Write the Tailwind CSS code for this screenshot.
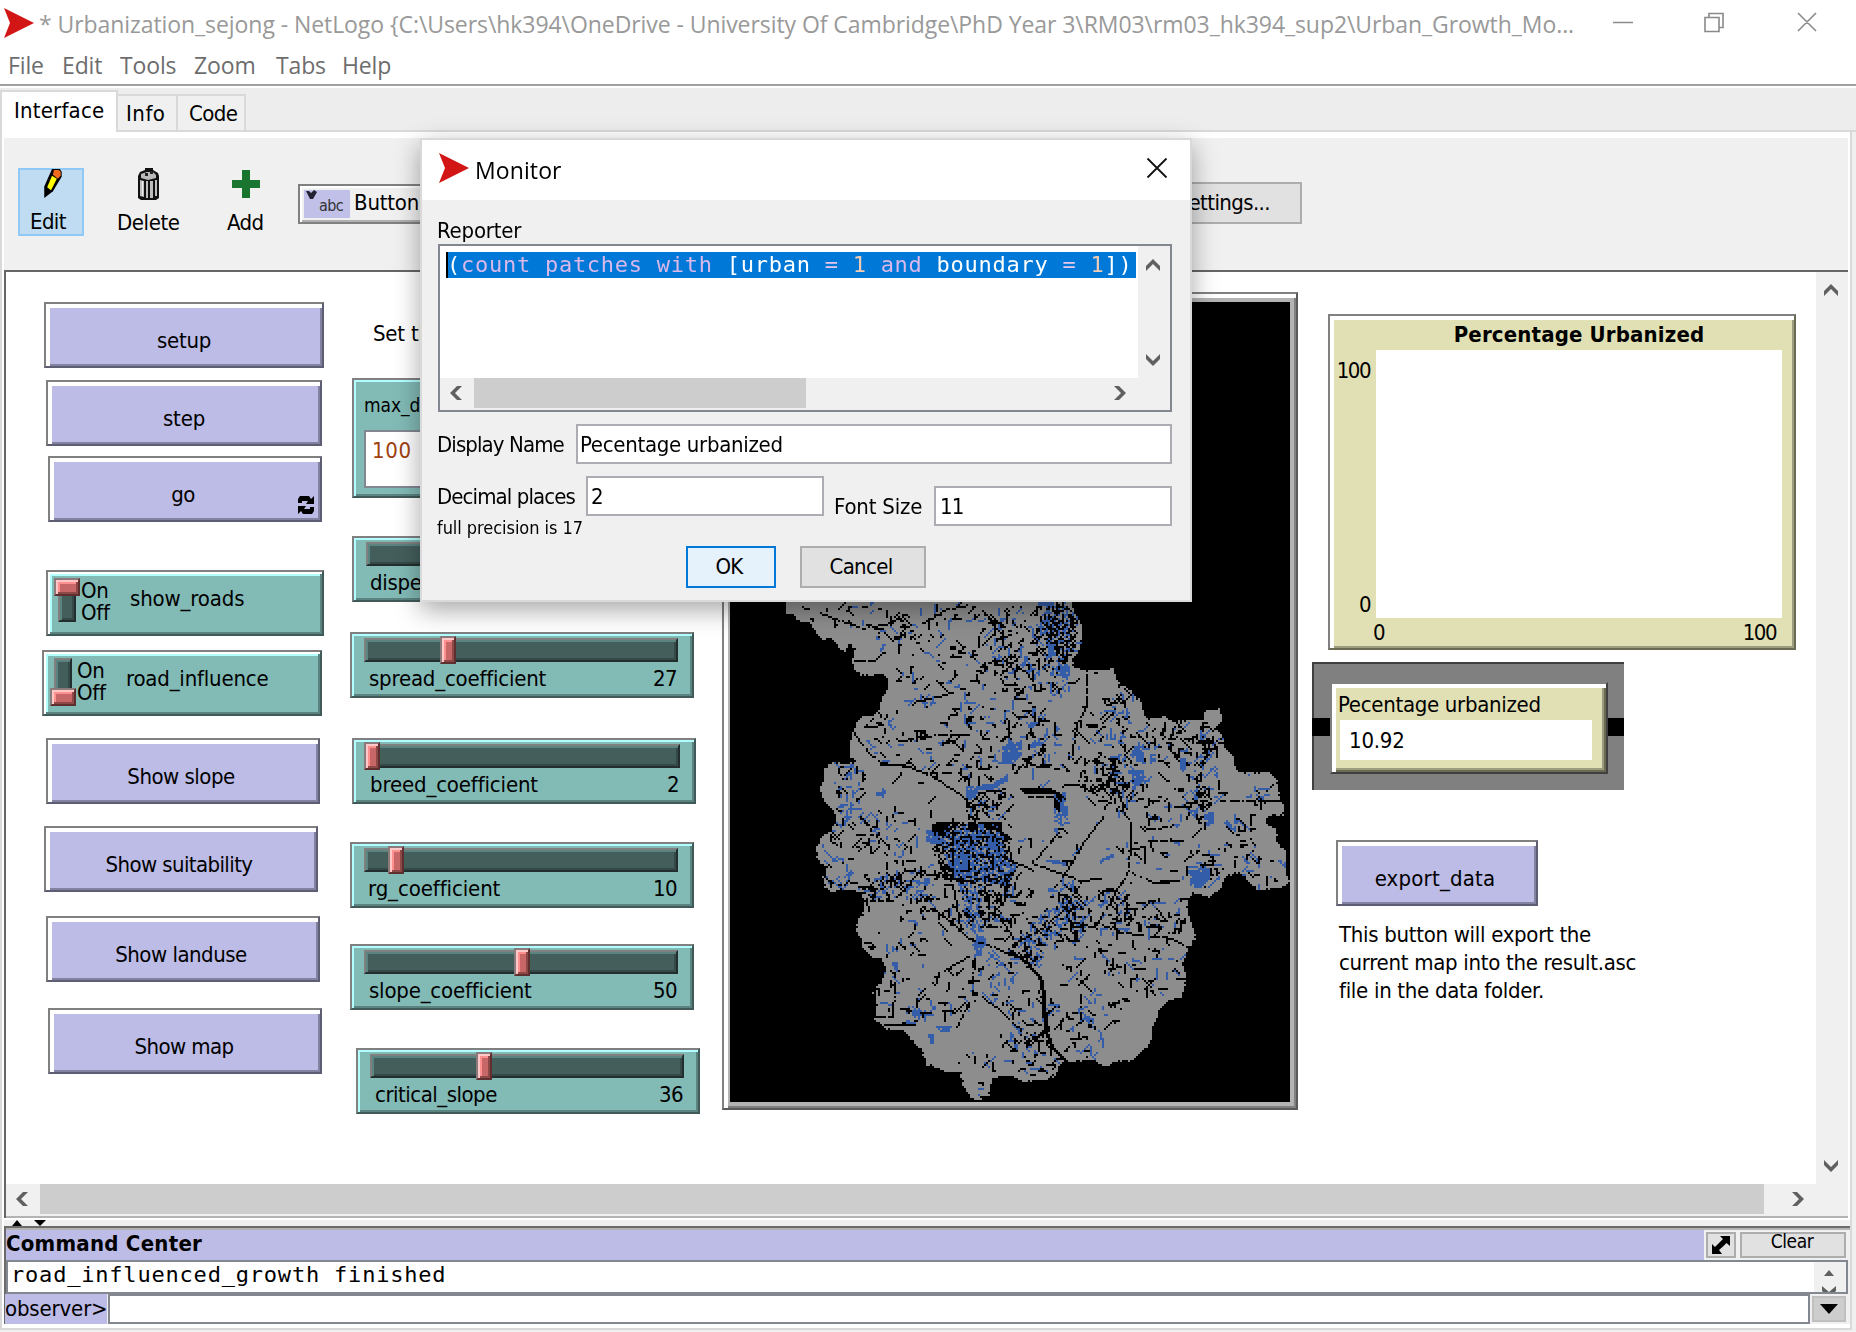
<!DOCTYPE html>
<html lang="en">
<head>
<meta charset="utf-8">
<title>Urbanization_sejong - NetLogo</title>
<script src="https://cdn.jsdelivr.net/npm/@tailwindcss/browser@4"></script>
</head>
<body class="w-[1856px] h-[1332px] overflow-hidden bg-[#f0f0f0] text-black font-['DejaVu_Sans_Condensed','DejaVu_Sans',sans-serif] text-[22px] leading-[24px] tracking-[-0.6px] whitespace-nowrap">
<div class="relative flex flex-col w-[1856px] h-[1332px]">

  <!-- Title bar -->
  <header class="flex items-center h-[45px] bg-white pl-1 shrink-0">
    <svg class="w-[31px] h-[32px] shrink-0" viewBox="0 0 31 32"><path d="M0 1L30 16L0 31L6 16Z" fill="#d21515"/></svg>
    <div class="ml-[4px] mt-[3px] w-[1536px] text-[#999] font-['Open_Sans',sans-serif] text-[23px] leading-[32px] tracking-[-0.07px]">* Urbanization_sejong - NetLogo {C:\Users\hk394\OneDrive - University Of Cambridge\PhD Year 3\RM03\rm03_hk394_sup2\Urban_Growth_Mo...</div>
    <svg class="ml-[38px] w-[206px] h-[22px]" viewBox="0 0 206 22" fill="none" stroke="#8a8a8a" stroke-width="1.6"><path d="M0 10.500H20M92 5.500h14v14h-14zM96 5.500v-4h14v14h-4M185 1L203 19M203 1L185 19"/></svg>
  </header>
  <nav class="flex h-[39px] bg-white pl-[8px] pt-[4px] gap-[18px] text-[#6d6d6d] font-['Open_Sans',sans-serif] text-[23px] leading-[32px] tracking-[-0.15px] shrink-0">
    <span class="w-[36px]">File</span><span class="w-[40px]">Edit</span><span class="w-[56px]">Tools</span><span class="w-[64px]">Zoom</span><span class="w-[48px]">Tabs</span><span>Help</span>
  </nav>
  <div class="h-1 bg-white border-t-2 border-[#a0a0a0] shrink-0"></div>

  <!-- Tabs -->
  <div class="flex items-end h-[44px] bg-[#ededed] shrink-0">
    <div class="w-[118px] h-[42px] bg-white border-2 border-b-0 border-[#d9d9d9] pl-[12px] pt-[7px] tracking-[0.2px]">Interface</div>
    <div class="w-[60px] h-[38px] bg-[#f0f0f0] border-2 border-l-0 border-[#d9d9d9] pl-[8px] pt-[6px] tracking-[0.5px]">Info</div>
    <div class="w-[68px] h-[38px] bg-[#f0f0f0] border-2 border-l-0 border-[#d9d9d9] pl-[11px] pt-[6px]">Code</div>
    <div class="grow h-0.5 bg-[#d9d9d9]"></div>
  </div>

  <div class="flex flex-col w-[1852px] h-[1198px] bg-white border-x-2 border-b-2 border-[#d9d9d9] pl-0.5 pt-[6px] shrink-0">
    <!-- Toolbar -->
    <div class="flex h-[132px] bg-[#f0f0f0] shrink-0 w-[1844px]">
      <div class="ml-[14px] mt-[30px] w-[66px] h-[68px] bg-[#bfdcf3] border-2 border-[#90c8f6] flex flex-col pl-[10px]">
        <svg class="ml-[12px] w-[20px] h-[31px] mt-[-2px]" viewBox="0 0 20 31"><path d="M10 1h8l2 3v5L11 24L2 31V19Z" fill="#000"/><path d="M10 8L15 11L9 23L5 20Z" fill="#ff0"/><path d="M12 2h5l2 2v4l-3 3l-5-4Z" fill="#f26a1b"/></svg>
        <span class="mt-[12px]">Edit</span>
      </div>
      <div class="ml-[33px] mt-[30px] w-[67px]">
        <svg class="ml-[20px] w-[23px] h-[32px]" viewBox="0 0 23 32"><path d="M3 4L8 2V0h8v2l5 3l1 3v22l-3 2H4l-3-2V8Z" fill="#111"/><path d="M4 6l6-2h6l3 3v3l-8 2l-7-2Z" fill="#bbb"/><path d="M3 12l4 1v16l-4-1ZM9 13h2v17H9ZM13 13h3v17h-3ZM18 12h2v16h-2Z" fill="#bdbdbd"/><path d="M8 5h3v3H8ZM13 3h3v3h-3Z" fill="#222"/><path d="M5 13h1v15H5Z" fill="#eee"/></svg>
        <div class="mt-[11px] tracking-[-0.4px]">Delete</div>
      </div>
      <div class="ml-[43px] mt-[32px] w-[44px]">
        <svg class="ml-[5px] w-[28px] h-[28px]" viewBox="0 0 28 28"><path d="M10 0h8v10h10v8H18v10h-8V18H0v-8h10Z" fill="#1a7530"/></svg>
        <div class="mt-[13px]">Add</div>
      </div>
      <div class="ml-[27px] mt-[46px] w-[300px] h-[40px] bg-[#f0f0f0] border-2 border-[#808080] shadow-[inset_2px_2px_0_#fff,inset_-2px_-2px_0_#b0b0b0] flex pl-1 pt-1">
        <div class="relative w-[46px] h-[28px] bg-[#c0c0e8]">
          <svg class="absolute left-0.5 top-0 w-[11px] h-[10px]" viewBox="0 0 11 10"><path d="M0 1h3l2 2l3-3l3 2L7 9H4L2 5Z" fill="#223"/></svg>
          <span class="absolute left-[15px] top-[5px] text-[16px] leading-[22px] text-[#333]">abc</span>
        </div>
        <span class="ml-1 mt-[3px] leading-[20px] tracking-[-0.2px]">Button</span>
      </div>
      <div class="ml-[536px] mt-[44px] w-[168px] h-[42px] bg-[#e1e1e1] border-2 border-[#adadad] text-right pr-[30px] pt-[7px]">Settings...</div>
    </div>

    <!-- Model interface: widgets placed freely on a canvas -->
    <div class="relative flex h-[948px] bg-white border-l-2 border-t-2 border-[#666] shrink-0 w-[1844px]">
      <div class="grow"></div>
      <div class="w-8 h-[912px] bg-[#f0f0f0] flex flex-col items-center justify-between py-[12px] pr-0.5">
        <svg class="w-[14px] h-[12px]" viewBox="0 0 14 12"><path d="M7 0L14 7V12L7 5L0 12V7Z" fill="#606060"/></svg>
        <svg class="w-[14px] h-[12px]" viewBox="0 0 14 12"><path d="M7 12L14 5V0L7 7L0 0V5Z" fill="#606060"/></svg>
      </div>
      <div class="absolute left-0 top-[912px] w-[1842px] h-[34px] bg-[#f0f0f0] border-b-2 border-[#b3b3b3]">
        <div class="flex items-center h-[30px]">
          <svg class="ml-[10px] w-[12px] h-[14px]" viewBox="0 0 12 14"><path d="M0 7L7 0H12L5 7L12 14H7Z" fill="#606060"/></svg>
          <div class="ml-[12px] w-[1724px] h-[30px] bg-[#cdcdcd]"></div>
          <svg class="ml-[28px] w-[12px] h-[14px]" viewBox="0 0 12 14"><path d="M12 7L5 0H0L7 7L0 14H5Z" fill="#606060"/></svg>
        </div>
      </div>

      <!-- The layer's origin is the window's top left corner -->
      <div class="absolute left-[-6px] top-[-272px]">
        <!-- Buttons -->
        <div class="absolute left-[44px] top-[302px] w-[280px] h-[66px] bg-[#bcbce6] border-2 border-t-[#808080] border-l-[#808080] border-r-[#5d5d74] border-b-[#5d5d74] shadow-[inset_4px_4px_0_#fff,inset_-2px_-2px_0_#8383a1] text-center pt-[25px] tracking-[-0.3px]">setup</div>
        <div class="absolute left-[46px] top-[380px] w-[276px] h-[66px] bg-[#bcbce6] border-2 border-t-[#808080] border-l-[#808080] border-r-[#5d5d74] border-b-[#5d5d74] shadow-[inset_4px_4px_0_#fff,inset_-2px_-2px_0_#8383a1] text-center pt-[25px] tracking-[-0.2px]">step</div>
        <div class="absolute left-[48px] top-[456px] w-[274px] h-[66px] bg-[#bcbce6] border-2 border-t-[#808080] border-l-[#808080] border-r-[#5d5d74] border-b-[#5d5d74] shadow-[inset_4px_4px_0_#fff,inset_-2px_-2px_0_#8383a1] text-center pt-[25px] pr-1">go
          <svg class="absolute right-[6px] bottom-[6px] w-[16px] h-[18px]" viewBox="0 0 16 18"><path d="M2 0h9l2 3l3-3v8H8l2-3H4v2H0V3ZM14 18H5l-2-3l-3 3v-8h8l-2 3h6v-2h4v4Z"/></svg>
        </div>
        <div class="absolute left-[46px] top-[738px] w-[274px] h-[66px] bg-[#bcbce6] border-2 border-t-[#808080] border-l-[#808080] border-r-[#5d5d74] border-b-[#5d5d74] shadow-[inset_4px_4px_0_#fff,inset_-2px_-2px_0_#8383a1] text-center pt-[25px] pr-1 tracking-[-0.5px]">Show slope</div>
        <div class="absolute left-[44px] top-[826px] w-[274px] h-[66px] bg-[#bcbce6] border-2 border-t-[#808080] border-l-[#808080] border-r-[#5d5d74] border-b-[#5d5d74] shadow-[inset_4px_4px_0_#fff,inset_-2px_-2px_0_#8383a1] text-center pt-[25px] pr-1">Show suitability</div>
        <div class="absolute left-[46px] top-[916px] w-[274px] h-[66px] bg-[#bcbce6] border-2 border-t-[#808080] border-l-[#808080] border-r-[#5d5d74] border-b-[#5d5d74] shadow-[inset_4px_4px_0_#fff,inset_-2px_-2px_0_#8383a1] text-center pt-[25px] pr-1 tracking-[-0.5px]">Show landuse</div>
        <div class="absolute left-[48px] top-[1008px] w-[274px] h-[66px] bg-[#bcbce6] border-2 border-t-[#808080] border-l-[#808080] border-r-[#5d5d74] border-b-[#5d5d74] shadow-[inset_4px_4px_0_#fff,inset_-2px_-2px_0_#8383a1] text-center pt-[25px] pr-[2px] tracking-[-0.6px]">Show map</div>

        <!-- Switches -->
        <div class="absolute left-[46px] top-[570px] w-[278px] h-[66px] bg-[#82bab6] border-2 border-t-[#808080] border-l-[#808080] border-r-[#3f5a58] border-b-[#3f5a58] shadow-[inset_2px_2px_0_#fff,inset_-2px_-2px_0_#5b8380,inset_4px_4px_0_#b3ffff] flex">
          <div class="relative ml-[10px] mt-[6px] w-[18px] h-[44px] bg-[#445e5c] border-2 border-t-[#808080] border-l-[#808080] border-r-[#222f2e] border-b-[#222f2e] shadow-[inset_2px_2px_0_#5b8380,inset_-2px_-2px_0_#354a48]">
            <div class="absolute left-[-6px] top-[-2px] w-[26px] h-[18px] bg-[#c86767] border-2 border-t-[#8c7a7a] border-l-[#8c7a7a] border-r-[#5f2f2f] border-b-[#5f2f2f] shadow-[inset_2px_2px_0_#ffc8c8,inset_-2px_-2px_0_#8d4848,inset_4px_4px_0_#ff9090]"></div>
          </div>
          <div class="ml-[5px] mt-[8px] w-[49px] leading-[22px] tracking-[-0.3px]">On<br>Off</div><div class="mt-[15px] tracking-[-0.15px]">show_roads</div>
        </div>
        <div class="absolute left-[42px] top-[650px] w-[280px] h-[66px] bg-[#82bab6] border-2 border-t-[#808080] border-l-[#808080] border-r-[#3f5a58] border-b-[#3f5a58] shadow-[inset_2px_2px_0_#fff,inset_-2px_-2px_0_#5b8380,inset_4px_4px_0_#b3ffff] flex">
          <div class="relative ml-[10px] mt-[6px] w-[18px] h-[44px] bg-[#445e5c] border-2 border-t-[#808080] border-l-[#808080] border-r-[#222f2e] border-b-[#222f2e] shadow-[inset_2px_2px_0_#5b8380,inset_-2px_-2px_0_#354a48]">
            <div class="absolute left-[-6px] top-[28px] w-[26px] h-[18px] bg-[#c86767] border-2 border-t-[#8c7a7a] border-l-[#8c7a7a] border-r-[#5f2f2f] border-b-[#5f2f2f] shadow-[inset_2px_2px_0_#ffc8c8,inset_-2px_-2px_0_#8d4848,inset_4px_4px_0_#ff9090]"></div>
          </div>
          <div class="ml-[5px] mt-[8px] w-[49px] leading-[22px] tracking-[-0.3px]">On<br>Off</div><div class="mt-[15px] tracking-[-0.2px]">road_influence</div>
        </div>

        <!-- Note and input -->
        <div class="absolute left-[373px] top-[322px] tracking-[-0.2px]">Set the</div>
        <div class="absolute left-[352px] top-[378px] w-[200px] h-[120px] bg-[#82bab6] border-2 border-t-[#808080] border-l-[#808080] border-r-[#3f5a58] border-b-[#3f5a58] shadow-[inset_2px_2px_0_#b3ffff,inset_-2px_-2px_0_#5b8380] pl-[10px]">
          <div class="mt-[13px] text-[19px] tracking-[-0.1px]">max_depth</div>
          <div class="mt-[13px] w-[170px] h-[58px] bg-white border-2 border-[#828790] pl-[6px] pt-[7px] text-[#a04010] tracking-[0.6px]">100</div>
        </div>

        <!-- Sliders -->
        <div class="absolute left-[352px] top-[536px] w-[344px] h-[66px] bg-[#82bab6] border-2 border-t-[#808080] border-l-[#808080] border-r-[#3f5a58] border-b-[#3f5a58] shadow-[inset_2px_2px_0_#b3ffff,inset_-2px_-2px_0_#5b8380] pl-[12px] pt-[4px]">
          <div class="w-[314px] h-6 bg-[#445e5c] border-2 border-t-[#808080] border-l-[#808080] border-r-[#222f2e] border-b-[#222f2e] shadow-[inset_2px_2px_0_#5b8380,inset_-2px_-2px_0_#354a48]"></div>
          <div class="mt-[5px] pl-[4px] tracking-[-0.3px]">dispersion_coefficient</div>
        </div>
        <div class="absolute left-[350px] top-[632px] w-[344px] h-[66px] bg-[#82bab6] border-2 border-t-[#808080] border-l-[#808080] border-r-[#3f5a58] border-b-[#3f5a58] shadow-[inset_2px_2px_0_#b3ffff,inset_-2px_-2px_0_#5b8380] pl-[12px] pt-[4px]">
          <div class="relative w-[314px] h-6 bg-[#445e5c] border-2 border-t-[#808080] border-l-[#808080] border-r-[#222f2e] border-b-[#222f2e] shadow-[inset_2px_2px_0_#5b8380,inset_-2px_-2px_0_#354a48]"><div class="absolute left-[74px] top-[-4px] w-4 h-7 bg-[#c86767] border-2 border-t-[#8c7a7a] border-l-[#8c7a7a] border-r-[#5f2f2f] border-b-[#5f2f2f] shadow-[inset_2px_2px_0_#ffc8c8,inset_-2px_-2px_0_#8d4848,inset_4px_4px_0_#ff9090]"></div></div>
          <div class="mt-[5px] pl-[5px] w-[313px] flex justify-between"><span class="tracking-[-0.2px]">spread_coefficient</span><span>27</span></div>
        </div>
        <div class="absolute left-[352px] top-[738px] w-[344px] h-[66px] bg-[#82bab6] border-2 border-t-[#808080] border-l-[#808080] border-r-[#3f5a58] border-b-[#3f5a58] shadow-[inset_2px_2px_0_#b3ffff,inset_-2px_-2px_0_#5b8380] pl-[12px] pt-[4px]">
          <div class="relative w-[314px] h-6 bg-[#445e5c] border-2 border-t-[#808080] border-l-[#808080] border-r-[#222f2e] border-b-[#222f2e] shadow-[inset_2px_2px_0_#5b8380,inset_-2px_-2px_0_#354a48]"><div class="absolute left-[-4px] top-[-4px] w-4 h-7 bg-[#c86767] border-2 border-t-[#8c7a7a] border-l-[#8c7a7a] border-r-[#5f2f2f] border-b-[#5f2f2f] shadow-[inset_2px_2px_0_#ffc8c8,inset_-2px_-2px_0_#8d4848,inset_4px_4px_0_#ff9090]"></div></div>
          <div class="mt-[5px] pl-[4px] w-[313px] flex justify-between"><span class="tracking-[-0.15px]">breed_coefficient</span><span>2</span></div>
        </div>
        <div class="absolute left-[350px] top-[842px] w-[344px] h-[66px] bg-[#82bab6] border-2 border-t-[#808080] border-l-[#808080] border-r-[#3f5a58] border-b-[#3f5a58] shadow-[inset_2px_2px_0_#b3ffff,inset_-2px_-2px_0_#5b8380] pl-[12px] pt-[4px]">
          <div class="relative w-[314px] h-6 bg-[#445e5c] border-2 border-t-[#808080] border-l-[#808080] border-r-[#222f2e] border-b-[#222f2e] shadow-[inset_2px_2px_0_#5b8380,inset_-2px_-2px_0_#354a48]"><div class="absolute left-[22px] top-[-4px] w-4 h-7 bg-[#c86767] border-2 border-t-[#8c7a7a] border-l-[#8c7a7a] border-r-[#5f2f2f] border-b-[#5f2f2f] shadow-[inset_2px_2px_0_#ffc8c8,inset_-2px_-2px_0_#8d4848,inset_4px_4px_0_#ff9090]"></div></div>
          <div class="mt-[5px] pl-[4px] w-[313px] flex justify-between"><span class="tracking-[-0.1px]">rg_coefficient</span><span>10</span></div>
        </div>
        <div class="absolute left-[350px] top-[944px] w-[344px] h-[66px] bg-[#82bab6] border-2 border-t-[#808080] border-l-[#808080] border-r-[#3f5a58] border-b-[#3f5a58] shadow-[inset_2px_2px_0_#b3ffff,inset_-2px_-2px_0_#5b8380] pl-[12px] pt-[4px]">
          <div class="relative w-[314px] h-6 bg-[#445e5c] border-2 border-t-[#808080] border-l-[#808080] border-r-[#222f2e] border-b-[#222f2e] shadow-[inset_2px_2px_0_#5b8380,inset_-2px_-2px_0_#354a48]"><div class="absolute left-[148px] top-[-4px] w-4 h-7 bg-[#c86767] border-2 border-t-[#8c7a7a] border-l-[#8c7a7a] border-r-[#5f2f2f] border-b-[#5f2f2f] shadow-[inset_2px_2px_0_#ffc8c8,inset_-2px_-2px_0_#8d4848,inset_4px_4px_0_#ff9090]"></div></div>
          <div class="mt-[5px] pl-[5px] w-[313px] flex justify-between"><span class="tracking-[-0.2px]">slope_coefficient</span><span>50</span></div>
        </div>
        <div class="absolute left-[356px] top-[1048px] w-[344px] h-[66px] bg-[#82bab6] border-2 border-t-[#808080] border-l-[#808080] border-r-[#3f5a58] border-b-[#3f5a58] shadow-[inset_2px_2px_0_#b3ffff,inset_-2px_-2px_0_#5b8380] pl-[12px] pt-[4px]">
          <div class="relative w-[314px] h-6 bg-[#445e5c] border-2 border-t-[#808080] border-l-[#808080] border-r-[#222f2e] border-b-[#222f2e] shadow-[inset_2px_2px_0_#5b8380,inset_-2px_-2px_0_#354a48]"><div class="absolute left-[104px] top-[-4px] w-4 h-7 bg-[#c86767] border-2 border-t-[#8c7a7a] border-l-[#8c7a7a] border-r-[#5f2f2f] border-b-[#5f2f2f] shadow-[inset_2px_2px_0_#ffc8c8,inset_-2px_-2px_0_#8d4848,inset_4px_4px_0_#ff9090]"></div></div>
          <div class="mt-[5px] pl-[5px] w-[313px] flex justify-between"><span class="tracking-[-0.5px]">critical_slope</span><span>36</span></div>
        </div>

        <!-- World view -->
        <div class="absolute left-[722px] top-[292px] w-[576px] h-[818px] bg-[#b3b3b3] border-2 border-t-[#808080] border-l-[#808080] border-r-[#5a5a5a] border-b-[#5a5a5a] shadow-[inset_4px_4px_0_#fff,inset_-2px_-2px_0_#808080] pl-[6px] pt-[8px]">
          <canvas id="world" width="280" height="400" class="block w-[560px] h-[800px] [image-rendering:pixelated]"></canvas>
        </div>

        <!-- Plot -->
        <div class="absolute left-[1328px] top-[314px] w-[468px] h-[336px] bg-[#e0e0b4] border-2 border-t-[#808080] border-l-[#808080] border-r-[#6b6b54] border-b-[#6b6b54] shadow-[inset_4px_4px_0_#fff,inset_-2px_-2px_0_#9c9c7e]">
          <div class="mt-[7px] ml-[34px] text-center font-bold tracking-[0.15px]">Percentage Urbanized</div>
          <div class="flex mt-[3px]">
            <div class="w-[46px] pr-[6px] h-[268px] flex flex-col justify-between items-end pt-[9px] pb-[1px] tracking-[-1.5px]"><span>100</span><span>0</span></div>
            <div class="w-[406px] h-[268px] bg-white"></div>
          </div>
          <div class="flex justify-between pl-[43px] pr-[18px] mt-[3px] tracking-[-1.5px]"><span>0</span><span>100</span></div>
        </div>

        <!-- Selected monitor -->
        <div class="absolute left-[1312px] top-[662px] w-[312px] h-[128px] bg-[#808080] border-l-2 border-t-2 border-[#404040]">
          <div class="absolute left-[-2px] top-[54px] w-[18px] h-[18px] bg-black"></div>
          <div class="absolute right-0 top-[54px] w-[18px] h-[18px] bg-black"></div>
          <div class="absolute left-[16px] top-[18px] w-[278px] h-[92px] bg-[#e0e0b4] border-2 border-t-[#808080] border-l-[#808080] border-r-[#404040] border-b-[#404040] shadow-[inset_4px_4px_0_#fff,inset_-2px_-2px_0_#6b6b54,inset_-4px_-4px_0_#9c9c7e] pl-[8px] pt-[9px]">
            <div class="ml-[-2px] tracking-[-0.3px]">Pecentage urbanized</div>
            <div class="mt-[3px] w-[252px] h-[40px] bg-white pl-[9px] pt-[9px] tracking-[-0.2px]">10.92</div>
          </div>
        </div>

        <div class="absolute left-[1336px] top-[840px] w-[202px] h-[66px] bg-[#bcbce6] border-2 border-t-[#808080] border-l-[#808080] border-r-[#5d5d74] border-b-[#5d5d74] shadow-[inset_4px_4px_0_#fff,inset_-2px_-2px_0_#8383a1] text-center pt-[25px] pr-1 tracking-[0.2px]">export_data</div>
        <p class="absolute left-[1339px] top-[921px] leading-[28px] tracking-[-0.3px]">This button will export the<br>current map into the result.asc<br>file in the data folder.</p>
      </div>
    </div>

    <!-- Splitter -->
    <div class="h-[8px] pt-0.5 shrink-0"><div class="h-[6px] bg-[#f0f0f0] pl-[8px]">
      <svg class="block w-[34px] h-[6px]" viewBox="0 0 34 6"><path d="M0 6L5 0L10 6ZM22 0H34L28 6Z"/></svg>
    </div></div>

    <!-- Command center -->
    <div class="flex flex-col w-[1846px] h-[98px] bg-[#f0f0f0] border-t-2 border-l-2 border-[#6b6b6b] shrink-0">
      <div class="flex h-[32px] border-t-2 border-[#b3b3b3]">
        <div class="w-[1698px] bg-[#bcbce6] pt-[2px] font-bold tracking-[0.25px]">Command Center</div>
        <div class="ml-[2px] mt-[2px] w-[30px] h-[26px] bg-[#e1e1e1] border-2 border-[#adadad] flex items-center justify-center">
          <svg class="w-[18px] h-[18px]" viewBox="0 0 18 18"><path d="M8 0H18V10L14.500 7L11 10.500L7 14L10 18H0V8L3 11L7 7L11 3Z"/></svg>
        </div>
        <div class="ml-1 mt-[2px] w-[106px] h-[26px] bg-[#e1e1e1] border-2 border-[#adadad] text-center text-[19px] leading-[14px] pr-[2px] tracking-[-0.4px]">Clear</div>
      </div>
      <div class="flex w-[1842px] h-[34px] bg-white border-2 border-[#828790] font-['DejaVu_Sans_Mono',monospace] leading-[26px] tracking-[0.8px]">
        <span class="ml-[3px] w-[1803px]">road_influenced_growth finished</span>
        <div class="w-[32px] bg-[#f0f0f0] overflow-hidden pl-[8px] pt-[8px]">
          <svg class="block w-[14px] h-[26px]" viewBox="0 0 14 26"><path d="M2 6L7 0L12 6ZM0 16L7 22L14 16V21L7 27L0 21Z" fill="#606060"/></svg>
        </div>
      </div>
      <div class="flex h-[30px]">
        <div class="w-[102px] bg-[#bcbce6] pt-[3px] ml-[-1px] mr-[1px] tracking-[-0.15px]">observer&gt;</div>
        <div class="w-[1702px] bg-white border-2 border-[#828790]"></div>
        <div class="ml-[2px] mt-[2px] w-[34px] h-[26px] bg-[#cdcdcd] border-2 border-[#bfbfbf] flex items-center justify-center"><svg class="w-[18px] h-[10px]" viewBox="0 0 18 10"><path d="M0 0H18L9 10Z"/></svg></div>
      </div>
    </div>
  </div>

  <!-- Monitor dialog -->
  <section class="absolute left-[420px] top-[138px] w-[772px] h-[464px] bg-[#f0f0f0] border-2 border-[#d9d9d9] shadow-[0_8px_24px_rgba(0,0,0,0.35)]">
    <div class="flex items-center h-[60px] bg-white pl-[17px] font-['Open_Sans',sans-serif] text-[23px] leading-[32px] tracking-[0.1px]">
      <svg class="w-[31px] h-[32px] mt-[-4px]" viewBox="0 0 31 32"><path d="M0 1L30 16L0 31L6 16Z" fill="#d21515"/></svg>
      <span class="ml-[5px]">Monitor</span>
      <svg class="ml-auto mr-[22px] mt-[-4px] w-[22px] h-[22px]" viewBox="0 0 22 22" stroke="#111" stroke-width="1.800"><path d="M1.500 1.500L20.500 20.500M20.500 1.500L1.500 20.500"/></svg>
    </div>
    <div class="pl-[15px] pt-[19px] h-[44px] tracking-[-0.2px]">Reporter</div>
    <div class="ml-4 w-[734px] h-[168px] bg-[#f0f0f0] border-2 border-[#828790]">
      <div class="flex h-[132px]">
        <div class="w-[698px] bg-white pl-[6px] pt-[6px]">
          <div class="w-[690px] h-[26px] bg-[#0078d7] border-l-2 border-black text-white font-['DejaVu_Sans_Mono',monospace] leading-[25px] tracking-[0.74px]"><span class="ml-[-1px]">(</span><span class="text-[#d9b8ea]">count patches with</span> [urban <span class="text-[#e8c8ea]">=</span> <span class="text-[#f3cdb5]">1</span> <span class="text-[#d9b8ea]">and</span> boundary <span class="text-[#e8c8ea]">=</span> <span class="text-[#f3cdb5]">1</span>])</div>
        </div>
        <div class="w-8 flex flex-col items-center justify-between pt-[13px] pb-[12px] pr-0.5">
          <svg class="w-[14px] h-[12px]" viewBox="0 0 14 12"><path d="M7 0L14 7V12L7 5L0 12V7Z" fill="#606060"/></svg>
          <svg class="w-[14px] h-[12px]" viewBox="0 0 14 12"><path d="M7 12L14 5V0L7 7L0 0V5Z" fill="#606060"/></svg>
        </div>
      </div>
      <div class="flex items-center h-[30px]">
        <svg class="ml-[10px] w-[12px] h-[14px]" viewBox="0 0 12 14"><path d="M0 7L7 0H12L5 7L12 14H7Z" fill="#606060"/></svg>
        <div class="ml-[12px] w-[332px] h-[30px] bg-[#cdcdcd]"></div>
        <svg class="ml-[308px] w-[12px] h-[14px]" viewBox="0 0 12 14"><path d="M12 7L5 0H0L7 7L0 14H5Z" fill="#606060"/></svg>
      </div>
    </div>
    <div class="flex mt-3 pl-[15px]">
      <span class="w-[139px] pt-[9px] tracking-[-0.9px]">Display Name</span>
      <div class="w-[596px] h-10 bg-white border-2 border-[#abadb3] pl-[2px] pt-[7px] tracking-[-0.3px]">Pecentage urbanized</div>
    </div>
    <div class="flex mt-3 pl-[15px]">
      <div class="w-[149px] pt-[9px] tracking-[-0.9px]">Decimal places<div class="mt-[7px] text-[18px] tracking-[-0.05px]">full precision is 17</div></div>
      <div class="w-[238px] h-10 bg-white border-2 border-[#abadb3] pl-[3px] pt-[7px]">2</div>
      <span class="ml-[10px] w-[100px] pt-[19px] tracking-[-0.2px]">Font Size</span>
      <div class="mt-[10px] w-[238px] h-10 bg-white border-2 border-[#abadb3] pl-[4px] pt-[7px] tracking-[-0.8px]">11</div>
    </div>
    <div class="absolute left-[264px] top-[406px] flex gap-6 text-center tracking-[-0.7px]">
      <div class="w-[90px] h-[42px] bg-[#e5f1fb] border-2 border-[#0078d7] pt-[7px] pr-1">OK</div>
      <div class="w-[126px] h-[42px] bg-[#e1e1e1] border-2 border-[#adadad] pt-[7px] pr-1">Cancel</div>
    </div>
  </section>
</div>

<script>
// World view: 280 x 400 patches. Map data is in survey units, SX x SY per patch.
const W = 280, H = 400, SX = 5.315, SY = 5.916;
const ctx = document.getElementById('world').getContext('2d');
const toX = x => x / SX - 5, toY = y => y / SY + 144;
let seed = 39417;
const rnd = () => ((seed = (seed * 1664525 + 1013904223) >>> 0) / 4294967296);
const GREY = '#8d8d8d', BLUE = '#345da9', BLACK = '#000';
const grid = Array.from({length: H}, () => new Array(W).fill(BLACK));
const inside = (pts, x, y) => {
  let c = false;
  for (let i = 0, j = pts.length - 2; i < pts.length; j = i, i += 2)
    if ((pts[i + 1] > y) !== (pts[j + 1] > y) && x < (pts[j] - pts[i]) * (y - pts[i + 1]) / (pts[j + 1] - pts[i + 1]) + pts[i]) c = !c;
  return c;
};
const proj = pts => pts.map((v, i) => i % 2 ? toY(v) : toX(v));
const fill = (pts, color, density = 1) => {
  const p = proj(pts);
  for (let y = 0; y < H; y++) for (let x = 0; x < W; x++)
    if (inside(p, x + .5, y + .5) && land[y][x] && rnd() < density) grid[y][x] = color;
};
const outline = [175,-60,175,70,190,72,210,90,240,98,248,115,260,130,270,148,295,142,312,155,315,175,330,182,345,158,358,170,352,210,360,240,375,252,400,252,415,246,435,250,445,265,446,295,430,315,428,352,405,372,375,374,360,405,350,435,342,465,348,495,365,510,330,515,300,510,280,528,276,560,268,590,275,625,300,650,310,675,295,710,270,730,255,770,262,800,285,820,275,850,278,880,300,895,320,885,365,890,380,910,385,950,365,980,362,1010,375,1030,380,1060,405,1087,430,1090,436,1120,430,1160,405,1190,418,1225,410,1270,440,1298,490,1305,520,1345,540,1365,545,1400,580,1415,600,1425,640,1425,640,1460,660,1485,672,1508,700,1506,715,1495,720,1450,745,1436,780,1440,805,1458,830,1450,885,1448,900,1415,912,1390,930,1398,985,1388,1025,1410,1050,1393,1095,1392,1145,1340,1150,1295,1170,1240,1190,1218,1225,1205,1240,1150,1230,1100,1247,1060,1263,1025,1250,975,1240,935,1255,895,1295,908,1330,885,1345,845,1380,835,1430,890,1500,878,1516,860,1505,845,1503,775,1480,745,1478,710,1447,685,1465,665,1498,668,1498,630,1487,610,1480,565,1465,540,1400,540,1370,535,1365,490,1345,470,1340,440,1318,405,1335,385,1330,352,1290,355,1285,385,1210,388,1180,375,1130,382,1118,325,1095,300,1060,275,1045,235,960,238,940,225,935,210,955,180,965,110,945,70,930,30,930,-60];
const po = proj(outline);
const land = grid.map((row, y) => row.map((_, x) => inside(po, x + .5 + (rnd() - .5) * .8, y + .5 + (rnd() - .5) * .8)));
for (let y = 0; y < H; y++) for (let x = 0; x < W; x++) if (land[y][x]) grid[y][x] = GREY;
const put = (x, y, c) => { x |= 0; y |= 0; if (land[y] && land[y][x]) grid[y][x] = c; };

// Scattered settlements: [cx, cy, rx, ry, strokes, share of blue]
const zones = [
  [500,70,300,60,48,.4],[470,120,60,50,28,.4],[620,130,130,90,34,.2],[790,150,100,110,60,.2],[760,230,90,90,55,.2],[890,110,65,110,100,.45],
  [850,280,90,60,45,.4],[600,240,120,80,28,.25],[540,330,30,20,16,.6],[720,370,90,60,38,.3],[850,400,50,60,32,.35],[670,480,200,90,80,.25],
  [430,430,80,80,26,.3],[340,570,50,60,28,.5],[360,700,80,80,40,.35],[460,740,80,90,42,.35],[310,830,40,60,24,.5],[430,875,70,40,60,.4],
  [530,870,70,60,45,.4],[720,640,80,50,50,.15],[870,490,60,60,24,.4],[1010,420,70,110,36,.25],[1080,340,50,70,24,.5],[1100,500,80,90,66,.45],
  [1050,600,80,50,40,.15],[1000,540,60,40,26,.15],[1200,450,100,70,60,.3],[1280,560,50,130,66,.4],[1310,430,40,60,20,.3],[1200,640,80,60,32,.35],
  [1380,740,50,80,28,.5],[1450,830,60,50,18,.4],[1440,610,40,30,12,.6],[1280,830,60,60,32,.6],[740,920,60,80,66,.2],[560,960,80,80,26,.3],
  [920,930,60,60,40,.45],[880,1010,90,50,60,.4],[1020,950,90,70,60,.3],[1110,960,80,60,34,.35],[1190,990,50,40,24,.1],[820,1070,50,50,36,.35],
  [480,1060,90,60,14,.4],[470,1180,70,70,16,.3],[610,1210,90,80,34,.3],[730,1150,60,70,32,.35],[820,1230,70,50,22,.3],[920,1270,80,50,28,.4],
  [820,1350,60,80,52,.35],[1010,1240,80,60,30,.4],[1140,1120,100,80,38,.3],[1000,1100,120,60,20,.25],[860,1410,60,40,26,.2],[680,1390,60,50,10,.3],
  [980,1350,60,40,14,.4],[520,1260,30,40,18,.6],[680,1470,50,30,8,.3],[700,1000,80,60,20,.3],[880,780,120,60,12,.3],[1140,780,120,60,12,.4],
  [830,750,620,620,170,.35]
];
for (const [cx, cy, rx, ry, n, b] of zones) for (let k = 0; k < n; k++) {
  const a = rnd() * 6.283, r = Math.sqrt(rnd());
  let x = toX(cx + Math.cos(a) * r * rx), y = toY(cy + Math.sin(a) * r * ry);
  const c = rnd() < b ? BLUE : BLACK, len = 1 + rnd() * 5;
  let dx = Math.round(rnd() * 2 - 1), dy = Math.round(rnd() * 2 - 1);
  for (let i = 0; i < len; i++) { put(x, y, c); x += dx; y += dy; if (rnd() < .35) { dx = Math.round(rnd() * 2 - 1); dy = Math.round(rnd() * 2 - 1); } }
}

// Built-up districts
fill([865,45,925,45,950,90,945,170,915,225,885,190,860,140], BLACK, .6);
fill([865,45,925,45,930,120,925,260,900,300,880,200,860,140], BLUE, .27);
fill([575,685,745,685,770,800,795,810,765,880,720,870,600,850,560,760], BLACK, .6);
fill([600,850,765,880,745,960,720,1000,670,1010,640,900], BLACK, .25);
fill([560,690,740,690,760,790,795,805,765,875,680,860,700,1010,655,1020,640,890,600,800], BLUE, .42);
fill([565,690,610,690,600,725,565,725], BLACK, .9);
fill([665,690,688,690,688,715,665,715], BLACK, .9);
fill([700,688,748,688,748,708,705,708], BLACK, .9);
fill([575,820,620,820,625,860,600,860], BLACK, .7);
fill([610,775,670,780,668,838,620,838], BLUE, .7);
fill([705,720,755,730,755,775,735,780,715,760], BLUE, .7);
fill([550,710,580,715,580,750,550,745], BLUE, .7);
fill([955,545,1060,590,1090,680,1060,650,1000,600,950,570], BLACK, .22);
fill([800,1010,930,900,960,960,870,1030,810,1060], BLUE, .2);
fill([1260,580,1300,580,1310,640,1280,660], BLACK, .5);
fill([885,600,918,600,928,690,905,698,886,680], BLUE, .7);
const blue = [
  [768,435,785,455,805,440,800,490,780,515,750,512,748,465,765,455],[820,460,850,435,855,460,825,468],
  [655,580,720,575,765,545,765,565,725,590,690,595,665,622,652,615],[832,30,890,30,890,45,850,48],[872,160,885,160,886,198,872,198],
  [905,225,928,225,928,255,905,255],[1100,470,1125,460,1130,515,1105,505],[1095,535,1125,530,1125,570,1108,582,1092,565],
  [1222,498,1237,500,1236,535,1222,530],[1285,665,1315,660,1312,690,1295,698],[1245,830,1300,820,1300,860,1275,885,1252,875],
  [672,1050,690,1020,705,1030,695,1080,675,1088],[1010,800,1045,780,1048,790,1010,812],[865,795,920,805,918,815,870,805],
  [415,600,440,592,440,605,418,610],[575,1290,615,1292,612,1308,585,1310],[550,1310,572,1312,570,1340,560,1340],[512,1245,532,1245,530,1270,510,1265],
  [540,855,560,850,560,870,545,878],[455,1103,475,1103,470,1130],[885,705,900,705,895,725],[815,400,840,385,845,395,818,418],[550,740,582,738,582,750,550,748],
  [575,205,586,205,586,212,575,212],[1338,685,1350,680,1362,700,1360,710]
];
for (const p of blue) fill(p, BLUE, .96);
fill([800,500,830,490,832,520,815,525], BLACK, .9);
fill([795,1090,835,1060,855,1085,828,1130], BLACK, .55);
fill([820,1068,850,1075,840,1110,820,1110], BLUE, .3);

// Roads: [width in patches, points...]
const roads = [
  [1,350,410,400,490,430,510,500,522,560,550,620,590,655,620,660,670],[1,660,640,690,600,760,590],[3,800,590,880,590,905,605],[1,820,610,890,612],
  [3,895,600,890,640],[1,620,680,620,830,660,830,660,800],[1,640,730,770,735],[1,765,740,775,800,830,830],[2,590,850,670,865],[1,500,830,590,850],[1,910,580,950,575,1000,605],
  [1,975,250,975,340,950,400,938,470,940,500],[2,430,515,480,518],[1,1000,560,1060,640,1092,690,1092,750,1087,830,1040,920,1000,990],
  [1,1020,670,970,740,935,810,905,860],[1,900,720,860,770,830,810,860,820,960,860,1010,855],[1,1100,840,1150,865,1220,860],[1,1235,800,1275,770],
  [1,960,860,920,940,860,1000,780,1050],[1,560,940,620,985,660,1030,710,1050,790,1085],[2,780,1075,810,1100,850,1150,860,1200,862,1300],
  [2,862,1300,880,1350,915,1395],[1,862,1300,820,1340],[1,930,980,1000,1000],[1,1060,1015,1125,1020],[1,1145,1025,1200,1030,1250,1060],[1,680,1190,740,1240,800,1300],
  [1,600,1125,660,1085],[1,640,1000,620,870],[1,410,1265,460,1262,466,1160],[1,440,1288,520,1285],[1,1330,625,1430,625],[1,1430,625,1490,625],
  [1,1120,760,1132,760,1132,810],[1,1150,770,1140,740,1230,740],[2,1150,865,1190,865],[1,500,440,560,432,660,430],[1,270,70,380,115,450,100,480,80],
  [1,350,212,410,208,440,185],[1,540,100,600,60,660,45],[1,700,60,730,110,735,150,790,125],[1,1370,840,1420,880],[1,385,920,460,920,530,840],
  [1,525,330,600,310,650,290],[1,390,915,395,950],[1,1120,700,1130,710,1200,700],[1,1080,650,1060,600,1000,560],[2,700,690,770,735],
  [1,630,1290,660,1230],[1,675,1150,675,1100],[1,740,960,790,1050],[1,770,880,800,840]
];
for (const [w, ...p] of roads) for (let i = 0; i + 3 < p.length; i += 2) {
  const x0 = toX(p[i]), y0 = toY(p[i + 1]), x1 = toX(p[i + 2]), y1 = toY(p[i + 3]);
  const n = Math.ceil(Math.max(Math.abs(x1 - x0), Math.abs(y1 - y0)));
  for (let k = 0; k <= n; k++) if (w > 1 || rnd() < .85) for (let d = 0; d < w; d++) put(x0 + (x1 - x0) * k / n + d, y0 + (y1 - y0) * k / n + (w > 2 ? d : 0), BLACK);
}
for (let y = 0; y < H; y++) for (let x = 0; x < W; x++) { ctx.fillStyle = grid[y][x]; ctx.fillRect(x, y, 1, 1); }
</script>
</body>
</html>
